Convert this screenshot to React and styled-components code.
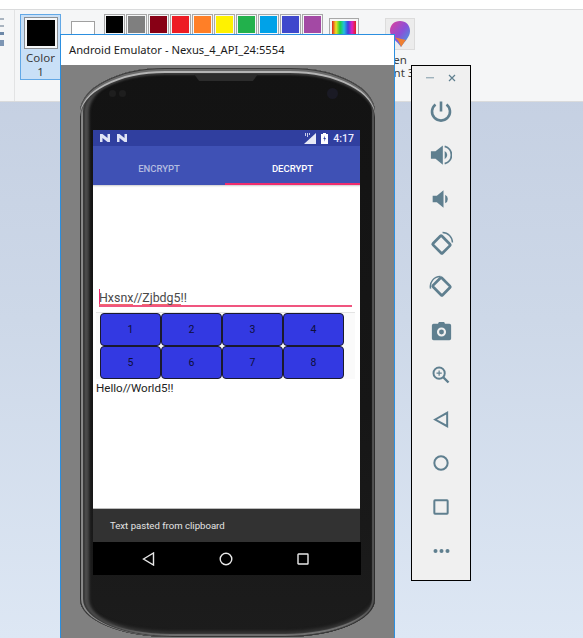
import React from 'react';
import styled, { createGlobalStyle } from 'styled-components';

const GlobalStyle = createGlobalStyle`
  html, body { margin: 0; padding: 0; }
  body { width: 583px; height: 638px; overflow: hidden; font-family: "Noto Sans", sans-serif; }
  * { box-sizing: border-box; }
`;

const Desktop = styled.div`
  position: relative;
  width: 583px;
  height: 638px;
  overflow: hidden;
  background: linear-gradient(180deg, #c2cde0 0%, #cdd8e8 50%, #dde7f4 100%);
`;

/* paint ribbon behind the emulator */
const TopStrip = styled.div`
  height: 10px;
  background: #fff;
  border-bottom: 1px solid #dadbdc;
`;
const Ribbon = styled.div`
  height: 92px;
  background: #f5f6f7;
  border-bottom: 1px solid #dadbdc;
  display: flex;
  align-items: flex-start;
`;
const MenuLines = styled.div`
  width: 15px;
  height: 91px;
  padding-top: 8px;
  border-right: 1px solid #e2e3e4;
  display: flex;
  flex-direction: column;
  gap: 5px;
`;
const MenuLine = styled.div`
  width: 4px;
  height: ${p => p.$h}px;
  background: ${p => p.$c};
`;
const ColorOne = styled.div`
  margin: 4px 0 0 5px;
  width: 41px;
  height: 66px;
  background: #c9e0f7;
  border: 1px solid #62a8e6;
  padding-top: 3px;
  display: flex;
  flex-direction: column;
  align-items: center;
  font-size: 11.5px;
  line-height: 14px;
  color: #3c3c3c;
  text-align: center;
`;
const BigSwatch = styled.div`
  width: 32px;
  height: 32px;
  background: #000;
  border: 2px solid #f5f6f7;
  outline: 1px solid #8b8f94;
  margin-bottom: 3px;
`;
const ColorTwo = styled.div`
  margin: 11px 0 0 10px;
  width: 24px;
  height: 24px;
  background: #fff;
  border: 1px solid #a0a0a0;
`;
const Palette = styled.div`
  margin: 5px 0 0 10px;
  display: flex;
  gap: 3px;
`;
const Swatch = styled.div`
  width: 19px;
  height: 19px;
  background: ${p => p.$c};
  border: 1px solid #f5f6f7;
  outline: 1px solid #a8a8a8;
`;
const Rainbow = styled.div`
  margin: 9px 0 0 8px;
  width: 28px;
  height: 28px;
  border: 2px solid #f5f6f7;
  outline: 1px solid #a8a8a8;
  background: linear-gradient(90deg, #e02020, #f0e020, #20d040, #20c0e0, #4040e0, #e020c0, #e02020);
`;
const OpenPaint = styled.div`
  margin: 8px 0 0 26px;
  width: 32px;
  display: flex;
  flex-direction: column;
  align-items: center;
  font-size: 11.5px;
  line-height: 13px;
  color: #3c3c3c;
  white-space: nowrap;
`;
const PaintIcon = styled.div`
  width: 30px;
  height: 32px;
  background: #ececec;
  border: 1px solid #dcdcdc;
  display: flex;
  justify-content: center;
  align-items: center;
  margin-bottom: 3px;
`;

/* emulator window */
const Window = styled.div`
  position: absolute;
  left: 60px;
  top: 34px;
  width: 335px;
  height: 620px;
  background: #808080;
  border: 1px solid #2b8fe0;
`;
const TitleBar = styled.div`
  height: 30px;
  background: #fff;
  padding-left: 8px;
  font-size: 11.2px;
  line-height: 30px;
  color: #1a1a1a;
  white-space: nowrap;
`;
const Phone = styled.div`
  position: relative;
  margin: 3px 0 0 19px;
  width: 295px;
  height: 569px;
  padding: 62px 0 0 13px;
  border-radius: 85px 85px 90px 90px / 44px 44px 38px 38px;
  background: linear-gradient(180deg, #131313 0%, #161616 60%, #1c1c1c 100%);
  box-shadow:
    inset 0 1px 0 #3a3a3a,
    inset 0 3px 0 #6a6a6a,
    inset 0 5px 0 #b4b4b4,
    inset 0 7px 2px #3c3c3c,
    inset 1px 0 0 #2a2a2a,
    inset 3px 0 0 #8a8a8a,
    inset 5px 0 1px #3a3a3a,
    inset 9px 0 3px #4c4c4c,
    inset -1px 0 0 #2a2a2a,
    inset -3px 0 1px #555,
    inset 0 -1px 0 #2a2a2a,
    inset 0 -3px 1px #777,
    inset 0 -6px 3px #333;
`;
const Speaker = styled.div`
  position: absolute;
  left: 114px;
  top: 6px;
  width: 64px;
  height: 7px;
  background: #2c2c2c;
  clip-path: polygon(0 0, 100% 0, 92% 100%, 8% 100%);
`;
const CameraDot = styled.div`
  position: absolute;
  left: ${p => p.$x}px;
  top: ${p => 25 - p.$size / 2}px;
  width: ${p => p.$size}px;
  height: ${p => p.$size}px;
  border-radius: 50%;
  background: ${p => p.$c};
`;
const Screen = styled.div`
  width: 267px;
  font-family: Roboto, sans-serif;
`;
const StatusBar = styled.div`
  height: 16px;
  background: #303f9f;
  display: flex;
  align-items: center;
  padding: 0 6px 0 7px;
  color: #eef;
  font-size: 10.5px;
  font-weight: 500;
`;
const StatusSpacer = styled.div`
  flex: 1;
`;
const Tabs = styled.div`
  height: 39px;
  background: #3f51b5;
  display: flex;
`;
const Tab = styled.div`
  width: ${p => p.$w}px;
  display: flex;
  align-items: center;
  justify-content: center;
  padding-top: 8px;
  font-size: 9.5px;
  font-weight: 500;
  color: ${p => (p.$active ? '#fff' : '#b4bce0')};
  border-bottom: 2px solid ${p => (p.$active ? '#f02d6e' : 'transparent')};
`;
const Content = styled.div`
  height: 324px;
  background: #fff;
  border-bottom: 1px solid #bbb;
  box-shadow: inset 0 3px 2px -2px #ccc;
  padding-top: 102px;
`;
const Field = styled.div`
  position: relative;
  margin-left: 6px;
  width: 253px;
  height: 20px;
  border-bottom: 2px solid #f0557f;
  padding-top: 4px;
  font-size: 12.4px;
  line-height: 13px;
  color: #4a4a4a;
  display: flex;
  align-items: flex-start;
`;
const Misspelled = styled.span`
  border-bottom: 1.5px solid #f06a6a;
`;
const Caret = styled.div`
  position: absolute;
  left: 0;
  top: 2px;
  width: 1px;
  height: 15px;
  background: #f02d6e;
`;
const Keypad = styled.div`
  margin: 5px 0 0 3px;
  width: 259px;
  padding-left: 4px;
  background: #fafafa;
  border-top: 1px solid #e4e4e4;
  display: grid;
  grid-template-columns: repeat(4, 61px);
  grid-auto-rows: 33px;
`;
const Key = styled.div`
  background: #3339e2;
  border: 1px solid #1a1a2e;
  border-radius: 4px;
  display: flex;
  align-items: center;
  justify-content: center;
  font-size: 10.5px;
  color: #0e0e38;
`;
const Output = styled.div`
  margin: 2px 0 0 3px;
  font-size: 11.6px;
  line-height: 15px;
  color: #222;
`;
const Snackbar = styled.div`
  height: 33px;
  background: #323232;
  padding-left: 17px;
  font-size: 9.6px;
  line-height: 33px;
  color: #e4e4e4;
`;
const NavBar = styled.div`
  height: 33px;
  background: #000;
  width: 268px;
  display: flex;
  align-items: center;
  justify-content: space-between;
  padding: 0 52px 0 49px;
`;

/* side toolbar */
const ToolWindow = styled.div`
  position: absolute;
  left: 411px;
  top: 65px;
  width: 60px;
  height: 516px;
  background: #f0f0f0;
  border: 1px solid #000;
  display: flex;
  flex-direction: column;
  align-items: center;
`;
const ToolHead = styled.div`
  height: 23px;
  width: 100%;
  padding: 0 14px;
  display: flex;
  align-items: center;
  justify-content: space-between;
`;
const ToolSlot = styled.div`
  height: 44px;
  width: 100%;
  display: flex;
  align-items: center;
  justify-content: center;
`;

const SLATE = '#5f7f8f';

const Icon = ({ size = 22, children, ...rest }) => (
  <svg width={size} height={size} viewBox="0 0 24 24" fill="none" stroke={SLATE} strokeWidth="2.6" {...rest}>
    {children}
  </svg>
);

const Tools = [
  <Icon key="p" size={24}><path d="M12 2.5v10" /><path d="M6.5 5.5a9 9 0 1 0 11 0" /></Icon>,
  <Icon key="vu" size={22}>
    <path d="M1 8h5l8-6.5v21L6 16H1z" fill={SLATE} stroke="none" />
    <path d="M16 7.5a5 5 0 0 1 0 9z" fill={SLATE} stroke="none" />
    <path d="M16 2.5a9.8 9.8 0 0 1 0 19" strokeWidth="2" />
  </Icon>,
  <Icon key="vd" size={20}>
    <path d="M2 8h5l8-6.5v21L7 16H2z" fill={SLATE} stroke="none" />
    <path d="M17 7a5.5 5.5 0 0 1 0 10z" fill={SLATE} stroke="none" />
  </Icon>,
  <Icon key="r1" size={25}>
    <rect x="5.5" y="7" width="13" height="12" rx="1" transform="rotate(45 12 13)" />
    <path d="M13 1.5a9.5 9.5 0 0 1 9.5 9.5" strokeWidth="1.4" />
  </Icon>,
  <Icon key="r2" size={25}>
    <rect x="5.5" y="5" width="13" height="12" rx="1" transform="rotate(45 12 11)" />
    <path d="M1.5 13A9.5 9.5 0 0 1 11 1.5" strokeWidth="1.4" />
  </Icon>,
  <svg key="c" width="21" height="21" viewBox="0 0 24 24">
    <path d="M8 3l1-2h6l1 2h5a2 2 0 0 1 2 2v15a2 2 0 0 1-2 2H3a2 2 0 0 1-2-2V5a2 2 0 0 1 2-2z" fill={SLATE} />
    <circle cx="12" cy="12.5" r="4" fill="none" stroke="#f0f0f0" strokeWidth="2.4" />
  </svg>,
  <Icon key="z" size={18}>
    <circle cx="9.5" cy="9.5" r="7.5" /><path d="M15 15l7 7" strokeWidth="3.2" />
    <path d="M9.5 6v7M6 9.5h7" strokeWidth="1.6" />
  </Icon>,
  <Icon key="b" size={17} strokeWidth="2.8"><path d="M3 12L20 2.5v19z" /></Icon>,
  <Icon key="o" size={16} strokeWidth="3"><circle cx="12" cy="12" r="10" /></Icon>,
  <Icon key="s" size={16} strokeWidth="3"><rect x="2" y="2" width="20" height="20" rx="1" /></Icon>,
  <svg key="m" width="17" height="6" viewBox="0 0 17 6" fill={SLATE}>
    <circle cx="2.5" cy="3" r="2" /><circle cx="8.5" cy="3" r="2" /><circle cx="14.5" cy="3" r="2" />
  </svg>,
];

const NIcon = () => (
  <svg width="10" height="8" viewBox="0 0 10 8" fill="#dfe3f5" style={{ marginRight: 7 }}>
    <path d="M0 0h2.5L7.5 4V0H10v8H7.5L2.5 4v4H0z" />
  </svg>
);

const PALETTE = ['#000', '#7f7f7f', '#880015', '#ed1c24', '#ff7f27', '#fff200', '#22b14c', '#00a2e8', '#3f48cc', '#a349a4'];
const KEYS = [1, 2, 3, 4, 5, 6, 7, 8];

export default function App() {
  return (
    <Desktop>
      <GlobalStyle />
      <TopStrip />
      <Ribbon>
        <MenuLines>
          <MenuLine $h={2} $c="#a9b4c0" />
          <MenuLine $h={2} $c="#a9b4c0" />
          <MenuLine $h={3} $c="#6d88a8" />
          <MenuLine $h={6} $c="#7d96b4" />
        </MenuLines>
        <ColorOne>
          <BigSwatch />
          Color<br />1
        </ColorOne>
        <ColorTwo />
        <Palette>
          {PALETTE.map(c => <Swatch key={c} $c={c} />)}
        </Palette>
        <Rainbow />
        <OpenPaint>
          <PaintIcon>
            <svg width="22" height="28" viewBox="0 0 22 28">
              <defs>
                <linearGradient id="drop" x1="0" y1="0" x2="1" y2="1">
                  <stop offset="0" stopColor="#e0409a" />
                  <stop offset="0.5" stopColor="#8a50d8" />
                  <stop offset="1" stopColor="#30b0e0" />
                </linearGradient>
              </defs>
              <path d="M11 1c6 0 10 4 10 10 0 6-5 10-9 16C8 21 1 17 1 11 1 5 5 1 11 1z" fill="url(#drop)" />
              <path d="M4 17c3 1 6 3 8 10 2-3 3-5 5-7z" fill="#f08030" />
            </svg>
          </PaintIcon>
          Open<br />Paint 3D
        </OpenPaint>
      </Ribbon>

      <Window>
        <TitleBar>Android Emulator - Nexus_4_API_24:5554</TitleBar>
        <Phone>
          <Speaker />
          <CameraDot $x={29} $size={7} $c="#1e1e1e" />
          <CameraDot $x={39} $size={7} $c="#1e1e1e" />
          <CameraDot $x={247} $size={11} $c="#1a1a24" />
          <Screen>
            <StatusBar>
              <NIcon />
              <NIcon />
              <StatusSpacer />
              <svg width="12" height="11" viewBox="0 0 12 11" style={{ marginRight: 5 }}>
                <path d="M12 0v11H0z" fill="#e8eaf6" />
                <path d="M1 0h1v3H1zM3 0h1v4H3zM5 0h1v2H5z" fill="#c8cdea" />
              </svg>
              <svg width="7" height="11" viewBox="0 0 7 11" style={{ marginRight: 5 }}>
                <path d="M2 0h3v1h2v10H0V1h2z" fill="#fff" />
                <path d="M4 2.5L2.3 6h1.2L3 8.8 5 5H3.7z" fill="#303f9f" />
              </svg>
              4:17
            </StatusBar>
            <Tabs>
              <Tab $w={132}>ENCRYPT</Tab>
              <Tab $w={135} $active>DECRYPT</Tab>
            </Tabs>
            <Content>
              <Field>
                <Caret />
                <Misspelled>Hxsnx</Misspelled>//<Misspelled>Zjbdg5</Misspelled>!!
              </Field>
              <Keypad>
                {KEYS.map(k => <Key key={k}>{k}</Key>)}
              </Keypad>
              <Output>Hello//World5!!</Output>
            </Content>
            <Snackbar>Text pasted from clipboard</Snackbar>
            <NavBar>
              <svg width="13" height="14" viewBox="0 0 13 14" fill="none" stroke="#e8e8e8" strokeWidth="1.4">
                <path d="M1.5 7L11.5 1v12z" />
              </svg>
              <svg width="14" height="14" viewBox="0 0 14 14" fill="none" stroke="#e8e8e8" strokeWidth="1.4">
                <circle cx="7" cy="7" r="5.8" />
              </svg>
              <svg width="12" height="12" viewBox="0 0 12 12" fill="none" stroke="#e8e8e8" strokeWidth="1.4">
                <rect x="1" y="1" width="10" height="10" rx="0.5" />
              </svg>
            </NavBar>
          </Screen>
        </Phone>
      </Window>

      <ToolWindow>
        <ToolHead>
          <svg width="8" height="2" viewBox="0 0 8 2"><rect width="8" height="1.4" fill="#9fb2bc" /></svg>
          <svg width="8" height="8" viewBox="0 0 8 8" stroke={SLATE} strokeWidth="1.2"><path d="M1 1l6 6M7 1L1 7" /></svg>
        </ToolHead>
        {Tools.map(t => <ToolSlot key={t.key}>{t}</ToolSlot>)}
      </ToolWindow>
    </Desktop>
  );
}
